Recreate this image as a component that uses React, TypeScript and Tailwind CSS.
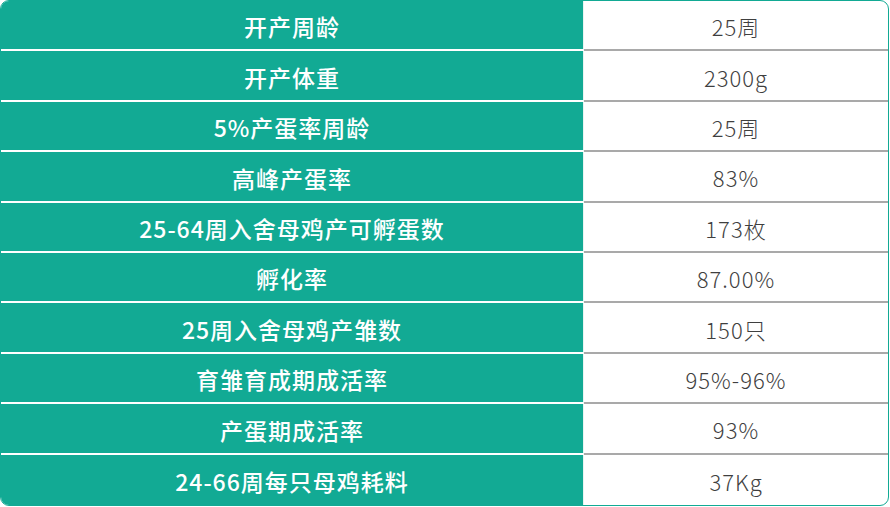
import React from 'react';

const rows: [string, string][] = [
  ['开产周龄', '25周'],
  ['开产体重', '2300g'],
  ['5%产蛋率周龄', '25周'],
  ['高峰产蛋率', '83%'],
  ['25-64周入舍母鸡产可孵蛋数', '173枚'],
  ['孵化率', '87.00%'],
  ['25周入舍母鸡产雏数', '150只'],
  ['育雏育成期成活率', '95%-96%'],
  ['产蛋期成活率', '93%'],
  ['24-66周每只母鸡耗料', '37Kg'],
];

export default function App() {
  return (
    <div className="w-[890px] h-[507px] bg-white" style={{ fontFamily: '"Noto Sans CJK SC", "Noto Sans", sans-serif' }}>
      <div className="w-[889px] h-[506px] border border-[#12aa94] rounded-[9px] overflow-hidden flex flex-col">
        {rows.map(([label, value], i) => {
          const last = i === rows.length - 1;
          return (
            <div key={i} className="flex flex-1">
              <div
                className={`w-[583px] flex items-center justify-center pt-[3px] bg-[#12aa94] text-white text-[23px] tracking-[1px] font-medium border-r border-r-[#e8f4f1] ${last ? '' : 'border-b-2 border-b-white'}`}
              >
                {label}
              </div>
              <div
                className={`flex-1 flex items-center justify-center pt-[3px] text-[#3f3f3f] text-[22px] tracking-[1px] font-light ${last ? '' : 'border-b-2 border-b-[#a9a9a9]'}`}
              >
                {value}
              </div>
            </div>
          );
        })}
      </div>
    </div>
  );
}
